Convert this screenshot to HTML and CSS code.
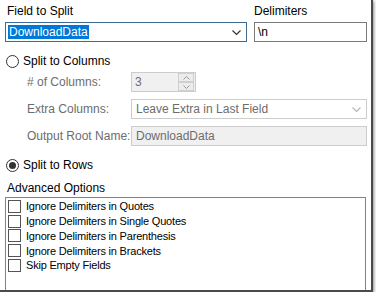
FILE: index.html
```html
<!DOCTYPE html>
<html lang="en">
<head>
    <meta charset="UTF-8">
    <title>Text To Columns</title>
    <link rel="stylesheet" href="styles.css">
</head>
<body>
    <div class="window">

        <!-- Field and delimiter pickers -->
        <div class="top-row">
            <div class="field-group">
                <div class="label">Field to Split</div>
                <div class="combo focused">
                    <span class="selected-text">DownloadData</span>
                    <svg class="arrow" width="9" height="6" viewBox="0 0 9 6"><path d="M0.5 0.5 L4.5 4.5 L8.5 0.5" fill="none" stroke="#333" stroke-width="1.2"/></svg>
                </div>
            </div>
            <div class="delim-group">
                <div class="label">Delimiters</div>
                <div class="textbox">\n</div>
            </div>
        </div>

        <!-- Split to columns -->
        <div class="radio-row first">
            <span class="radio"></span>
            <span>Split to Columns</span>
        </div>
        <div class="options">
            <div class="opt-label">#&nbsp;of Columns:</div>
            <div class="opt-control">
                <div class="spin disabled">
                    <span class="spin-value">3</span>
                    <div class="spin-buttons">
                        <span class="spin-btn"><svg width="7" height="4" viewBox="0 0 7 4"><path d="M0.5 3.5 L3.5 0.5 L6.5 3.5" fill="none" stroke="#9a9a9a"/></svg></span>
                        <span class="spin-btn"><svg width="7" height="4" viewBox="0 0 7 4"><path d="M0.5 0.5 L3.5 3.5 L6.5 0.5" fill="none" stroke="#9a9a9a"/></svg></span>
                    </div>
                </div>
            </div>

            <div class="opt-label">Extra Columns:</div>
            <div class="opt-control">
                <div class="combo disabled wide">
                    <span>Leave Extra in Last Field</span>
                    <svg class="arrow" width="9" height="6" viewBox="0 0 9 6"><path d="M0.5 0.5 L4.5 4.5 L8.5 0.5" fill="none" stroke="#b5b5b5" stroke-width="1.1"/></svg>
                </div>
            </div>

            <div class="opt-label">Output Root Name:</div>
            <div class="opt-control">
                <div class="textbox disabled wide">DownloadData</div>
            </div>
        </div>

        <!-- Split to rows -->
        <div class="radio-row second">
            <span class="radio checked"></span>
            <span>Split to Rows</span>
        </div>

        <div class="label adv">Advanced Options</div>
        <ul class="checklist">
            <li><span class="check"></span>Ignore Delimiters in Quotes</li>
            <li><span class="check"></span>Ignore Delimiters in Single Quotes</li>
            <li><span class="check"></span>Ignore Delimiters in Parenthesis</li>
            <li><span class="check"></span>Ignore Delimiters in Brackets</li>
            <li><span class="check"></span>Skip Empty Fields</li>
        </ul>
    </div>
</body>
</html>
```

FILE: styles.css
```css
body {
    margin: 0;
    padding: 0;
    background-color: #ffffff;
    font-family: "Liberation Sans", Arial, sans-serif;
    font-size: 12px;
    color: #000;
}

/* Dialog frame with the screenshot shadow */
.window {
    width: 371px;
    height: 290px;
    background-color: #fff;
    border-right: 2px solid #4a4a4a;
    border-bottom: 2px solid #4a4a4a;
    box-shadow: 1px 1px 3px rgba(0,0,0,0.45);
    overflow: hidden;
    position: relative;
}

.label {
    line-height: 16px;
    padding-left: 7px;
}

/* Top row */
.top-row {
    display: flex;
    padding-top: 3px;
}

.field-group {
    width: 247px;
}

.delim-group {
    margin-left: 7px;
}

.delim-group .label {
    padding-left: 0;
}

.combo, .textbox, .spin {
    box-sizing: border-box;
    height: 20px;
    border: 1px solid #7a7a7a;
    background-color: #fff;
    display: flex;
    align-items: center;
    padding-left: 2px;
    position: relative;
}

.field-group .combo {
    margin-top: 3px;
    margin-left: 5px;
    width: 242px;
}

.combo.focused {
    border-color: #3d6b93;
}

.selected-text {
    background-color: #0078d7;
    color: #fff;
    line-height: 14px;
    padding: 0 1px;
}

.arrow {
    position: absolute;
    right: 5px;
    top: 7px;
}

.delim-group .textbox {
    margin-top: 3px;
    width: 113px;
    padding-left: 3px;
}

/* Radio buttons */
.radio-row {
    display: flex;
    align-items: center;
    padding-left: 6px;
    height: 14px;
}

.radio-row.first {
    margin-top: 12px;
}

.radio-row.second {
    margin-top: 12px;
}

.radio {
    box-sizing: border-box;
    width: 13px;
    height: 13px;
    border: 1px solid #333;
    border-radius: 50%;
    margin-right: 4px;
    display: flex;
    align-items: center;
    justify-content: center;
}

.radio.checked::after {
    content: "";
    width: 7px;
    height: 7px;
    border-radius: 50%;
    background-color: #333;
}

/* Column options */
.options {
    display: grid;
    grid-template-columns: 104px 236px;
    row-gap: 6px;
    padding-left: 27px;
    margin-top: 3px;
    color: #6d6d6d;
}

.opt-label {
    line-height: 20px;
    padding-top: 1px;
}

.opt-control {
    padding-top: 1px;
}

.disabled {
    background-color: #f0f0f0;
    border-color: #cccccc;
    color: #6d6d6d;
}

.combo.disabled {
    background-color: #fff;
    border-color: #cccccc;
}

.wide {
    width: 236px;
    padding-left: 4px;
}

.spin {
    width: 65px;
    padding-left: 3px;
}

.spin-value {
    flex: 1;
}

.spin-buttons {
    display: flex;
    flex-direction: column;
    width: 16px;
    height: 18px;
    margin-right: 1px;
}

.spin-btn {
    box-sizing: border-box;
    height: 9px;
    border: 1px solid #cfcfcf;
    background-color: #ececec;
    display: flex;
    align-items: center;
    justify-content: center;
}

/* Advanced options list */
.adv {
    margin-top: 8px;
    line-height: 16px;
}

.checklist {
    list-style: none;
    box-sizing: border-box;
    margin: 1px 0 0 5px;
    padding: 1px 0 0 2px;
    width: 361px;
    height: 110px;
    border: 1px solid #828282;
    font-size: 11px;
    letter-spacing: -0.2px;
}

.checklist li {
    display: flex;
    align-items: center;
    height: 14.75px;
    margin: 0;
}

.check {
    box-sizing: border-box;
    width: 13px;
    height: 13px;
    border: 1px solid #555;
    background-color: #fff;
    margin-right: 5px;
}
```
